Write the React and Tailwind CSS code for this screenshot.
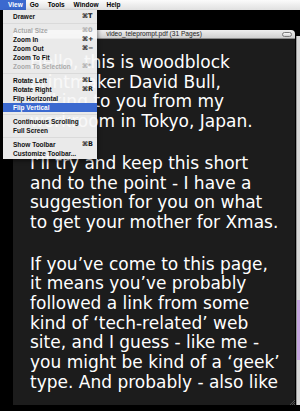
const items = [
  { label: 'Drawer', sc: '⌘T' },
  { sep: true },
  { label: 'Actual Size', sc: '⌘0', disabled: true },
  { label: 'Zoom In', sc: '⌘+' },
  { label: 'Zoom Out', sc: '⌘−' },
  { label: 'Zoom To Fit' },
  { label: 'Zoom To Selection', sc: '⌘*', disabled: true },
  { sep: true },
  { label: 'Rotate Left', sc: '⌘L' },
  { label: 'Rotate Right', sc: '⌘R' },
  { label: 'Flip Horizontal' },
  { label: 'Flip Vertical', active: true },
  { sep: true },
  { label: 'Continuous Scrolling' },
  { label: 'Full Screen' },
  { sep: true },
  { label: 'Show Toolbar', sc: '⌘B' },
  { label: 'Customize Toolbar...' },
];

const paragraphs = [
  ['Hello, this is woodblock', 'printmaker David Bull,', 'talking to you from my', 'workroom in Tokyo, Japan.'],
  ['I’ll try and keep this short', 'and to the point - I have a', 'suggestion for you on what', 'to get your mother for Xmas.'],
  [
    'If you’ve come to this page,',
    'it means you’ve probably',
    'followed a link from some',
    'kind of ‘tech-related’ web',
    'site, and I guess - like me -',
    'you might be kind of a ‘geek’',
    'type. And probably - also like',
  ],
];

function MenuRow({ item }) {
  if (item.sep) {
    return (
      <div className="h-[5px] flex items-center">
        <div className="h-px w-full bg-[#dadada]" />
      </div>
    );
  }
  const base = 'h-[9px] flex items-center pl-[10px] leading-[9px] whitespace-nowrap';
  const color = item.active
    ? 'bg-[#3b69cf] text-white'
    : item.disabled
    ? 'text-[#a8a8a8]'
    : 'text-[#111]';
  return (
    <div className={base + ' ' + color}>
      <span className="flex-1">{item.label}</span>
      <span className="w-[15px] font-['DejaVu_Sans',sans-serif] text-[6.5px]">{item.sc || ''}</span>
    </div>
  );
}

export default function App() {
  return (
    <div className="w-[300px] h-[411px] bg-black overflow-hidden relative flex flex-col">
      {/* menu bar */}
      <div className="h-[10px] flex items-stretch bg-gradient-to-b from-[#fbfbfb] to-[#e0e0e0] text-[6.5px] font-bold leading-[10px] text-black font-['Liberation_Sans',Arial,sans-serif]">
        <div className="pl-[8px] pr-[3px] bg-[#3b69cf] text-white">View</div>
        <div className="ml-[4px]">Go</div>
        <div className="ml-[9px]">Tools</div>
        <div className="ml-[9px]">Window</div>
        <div className="ml-[8px]">Help</div>
      </div>

      {/* window row */}
      <div className="flex mt-[20px] h-[375px]">
        <div className="ml-[13px] w-[282px] flex flex-col">
          <div className="h-[9px] rounded-t-[4px] bg-gradient-to-b from-[#eeeeee] to-[#cfcfcf] border-b border-[#8a8a8a] flex items-center justify-center relative">
            <span className="text-[6.6px] leading-[8px] text-[#222] font-['Liberation_Sans',Arial,sans-serif]">
              video_teleprompt.pdf (31 Pages)
            </span>
            <div className="absolute right-[3px] top-[2px] w-[10px] h-[5px] rounded-full border border-[#7a7a7a] bg-gradient-to-b from-[#fafafa] to-[#d0d0d0]" />
          </div>
          <div className="flex-1 bg-[#1c1c1c] pl-[17px] pt-[14px] text-white text-[17px] leading-[19.7px] font-['DejaVu_Sans',Verdana,sans-serif] relative">
            {paragraphs.map((p, i) => (
              <div key={i} className={i === 0 ? '' : 'mt-[22px]'}>
                {p.map((line, j) => (
                  <div key={j} className="whitespace-nowrap">{line}</div>
                ))}
              </div>
            ))}
            <svg className="absolute right-0 bottom-0" width="6" height="6" viewBox="0 0 6 6">
              <path d="M1 6L6 1M3 6L6 3M5 6L6 5" stroke="#6a6a6a" strokeWidth="0.7" />
            </svg>
          </div>
        </div>
        <div className="ml-[1px] mt-[6px] w-[4px] flex flex-col border-l border-[#9a9a9a]">
          <div className="h-[264px] bg-[#dadada]" />
          <div className="h-[60px] bg-[#c9a8e2]" />
          <div className="flex-1 bg-[#dadada]" />
        </div>
      </div>

      {/* dropdown menu */}
      <div className="absolute left-[3px] top-[10px] w-[94px] py-[1.5px] bg-[#f8f8f8]/[0.94] shadow-[1px_2px_4px_rgba(0,0,0,0.45)] text-[6.5px] font-bold font-['Liberation_Sans',Arial,sans-serif]">
        {items.map((it, i) => (
          <MenuRow key={i} item={it} />
        ))}
      </div>
    </div>
  );
}
